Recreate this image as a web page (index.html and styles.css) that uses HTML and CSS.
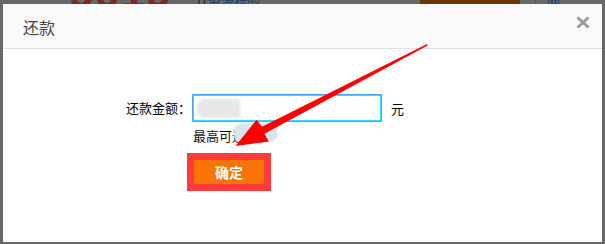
FILE: index.html
```html
<!DOCTYPE html>
<html lang="zh">
<head>
<meta charset="utf-8">
<title>还款</title>
<link rel="stylesheet" href="styles.css">
</head>
<body>
<div class="page">
  <div class="under">
    <span class="u-num">9019</span>
    <span class="u-dark">儿</span>
    <span class="u-link">资源标的</span>
    <span class="u-bar"></span>
    <span class="u-line"></span>
    <span class="u-link2">网</span>
  </div>
  <div class="dialog">
    <div class="dlg-head">
      <span class="dlg-title">还款</span>
      <svg class="dlg-close" width="14" height="13" viewBox="0 0 14 13"><path d="M1.5 1.5 L12.5 11.5 M12.5 1.5 L1.5 11.5" stroke="#9a9a9a" stroke-width="3" stroke-linecap="butt"/></svg>
    </div>
    <div class="dlg-body">
      <div class="row">
        <label class="lbl">还款金额：</label>
        <div class="inp"><span class="inp-blur"></span></div>
        <span class="unit">元</span>
      </div>
      <div class="row tip-row">
        <span class="tip">最高可还</span>
        <span class="tip-blur"></span>
      </div>
      <div class="row btn-row">
        <span class="mark"><button class="btn">确定</button></span>
      </div>
    </div>
  </div>
  <svg class="arrow" width="605" height="244" viewBox="0 0 605 244">
    <polygon points="427,44 262,126.8 256.5,119.8 235.5,146 268.8,141.6 264.5,133.8 427.6,45.4" fill="#ff0000"/>
  </svg>
</div>
</body>
</html>
```
FILE: styles.css
```css
html, body {
  margin: 0;
  padding: 0;
}
body {
  background: #686868;
  font-family: "Noto Sans CJK SC", "Noto Sans", sans-serif;
}
.page {
  position: relative;
  width: 605px;
  height: 244px;
  overflow: hidden;
  background: #686868;
}
.under {
  display: flex;
  align-items: flex-end;
  height: 4px;
  overflow: hidden;
}
.under span {
  flex: none;
  display: block;
}
.u-num {
  margin-left: 69px;
  width: 112px;
  font: bold 46px/40px "Liberation Sans", sans-serif;
  color: #7a2a21;
  height: 40px;
  margin-bottom: -8px;
}
.u-dark {
  margin-left: 14px;
  font-size: 14px;
  line-height: 20px;
  height: 20px;
  color: #222;
  margin-bottom: -6px;
}
.u-link {
  margin-left: -1px;
  font-size: 13px;
  line-height: 20px;
  height: 20px;
  color: #1b4370;
  margin-bottom: -7px;
}
.u-bar {
  margin-left: 160px;
  width: 100px;
  height: 4px;
  background: #6a3300;
}
.u-line {
  margin-left: 15px;
  width: 1px;
  height: 4px;
  background: #585858;
}
.u-link2 {
  margin-left: 11px;
  font-size: 13px;
  line-height: 20px;
  height: 20px;
  color: #1b4370;
  margin-bottom: -7px;
}
.dialog {
  margin-left: 3px;
  width: 599px;
  height: 238px;
  background: #fff;
}
.dlg-head {
  display: flex;
  justify-content: space-between;
  align-items: flex-start;
  height: 44px;
  background: #f9f9f9;
  border-bottom: 1px solid #e2e2e2;
  padding: 0 12px 0 20px;
}
.dlg-title {
  font-size: 16px;
  line-height: 46px;
  color: #444;
}
.dlg-close {
  margin-top: 12px;
}
.dlg-body {
  padding-top: 45px;
}
.row {
  display: flex;
  align-items: center;
  font-size: 13px;
  color: #000;
}
.lbl {
  width: 189px;
  text-align: right;
  padding-right: 1px;
  box-sizing: border-box;
  line-height: 28px;
}
.inp {
  width: 190px;
  height: 28px;
  box-sizing: border-box;
  border: 1px solid #4aa6ff;
  box-shadow: inset 0 0 0 1px #2fdcff;
  background: #fff;
  padding: 4px 0 0 4px;
}
.inp-blur {
  display: block;
  width: 43px;
  height: 19px;
  border-radius: 8px 2px 2px 8px;
  background: #e8e8e8;
  filter: blur(0.8px);
}
.unit {
  margin-left: 9px;
}
.tip-row {
  margin-left: 190px;
  height: 20px;
  margin-top: 1px;
  align-items: flex-start;
}
.tip {
  line-height: 14px;
  margin-top: 6px;
  color: #111;
}
.tip-blur {
  display: block;
  width: 45px;
  height: 20px;
  margin-left: -12px;
  border-radius: 10px;
  background: #d6e4ec;
  filter: blur(0.8px);
}
.btn-row {
  margin-left: 184px;
  margin-top: 10px;
}
.mark {
  display: block;
  border: 7px solid #ff3b3b;
}
.btn {
  display: block;
  width: 70px;
  height: 24px;
  border: 0;
  margin: 0;
  padding: 0;
  background: #f97404;
  color: #fff;
  font-family: "Noto Sans CJK SC", sans-serif;
  font-size: 14px;
  font-weight: bold;
  line-height: 24px;
}
.arrow {
  position: absolute;
  left: 0;
  top: 0;
  pointer-events: none;
}
```
